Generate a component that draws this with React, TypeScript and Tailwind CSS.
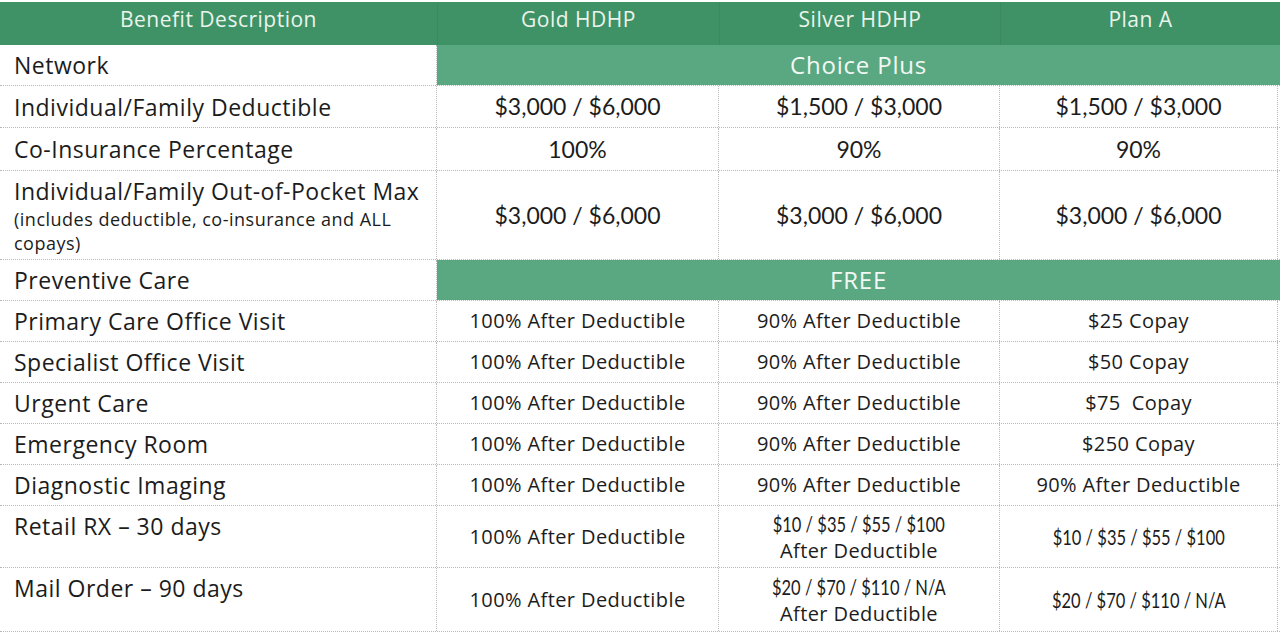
const cols = "grid-cols-[437px_282px_281px_280px]";
const line = "border-dotted border-[#b8b8b8]";

type Row = {
  label: string;
  sub?: string;
  values?: string[];
  span?: string;
  h: string;
  top?: boolean;
  kind?: "big" | "small" | "rx";
};

const after = "100% After Deductible";
const after90 = "90% After Deductible";

const rows: Row[] = [
  { label: "Network", span: "Choice Plus", h: "h-[41px]" },
  { label: "Individual/Family Deductible", values: ["$3,000 / $6,000", "$1,500 / $3,000", "$1,500 / $3,000"], h: "h-[42px]", kind: "big" },
  { label: "Co-Insurance Percentage", values: ["100%", "90%", "90%"], h: "h-[43px]", kind: "big" },
  {
    label: "Individual/Family Out-of-Pocket Max",
    sub: "(includes deductible, co-insurance and ALL copays)",
    values: ["$3,000 / $6,000", "$3,000 / $6,000", "$3,000 / $6,000"],
    h: "h-[89px]",
    top: true,
    kind: "big",
  },
  { label: "Preventive Care", span: "FREE", h: "h-[41px]" },
  { label: "Primary Care Office Visit", values: [after, after90, "$25 Copay"], h: "h-[41px]", kind: "small" },
  { label: "Specialist Office Visit", values: [after, after90, "$50 Copay"], h: "h-[41px]", kind: "small" },
  { label: "Urgent Care", values: [after, after90, "$75  Copay"], h: "h-[41px]", kind: "small" },
  { label: "Emergency Room", values: [after, after90, "$250 Copay"], h: "h-[41px]", kind: "small" },
  { label: "Diagnostic Imaging", values: [after, after90, after90], h: "h-[41px]", kind: "small" },
  {
    label: "Retail RX – 30 days",
    values: [after, "$10 / $35 / $55 / $100\nAfter Deductible", "$10 / $35 / $55 / $100"],
    h: "h-[62px]",
    top: true,
    kind: "rx",
  },
  {
    label: "Mail Order – 90 days",
    values: [after, "$20 / $70 / $110 / N/A\nAfter Deductible", "$20 / $70 / $110 / N/A"],
    h: "h-[64px]",
    top: true,
    kind: "rx",
  },
];

function Value({ text, kind, i }: { text: string; kind?: Row["kind"]; i: number }) {
  const border = `border-r ${line} ${i === 2 ? "mr-[2px]" : ""}`;
  if (kind === "big") {
    return (
      <div className={`flex items-center justify-center text-[23px] font-['Lato',sans-serif] ${border}`}>
        {text}
      </div>
    );
  }
  if (kind === "rx" && i > 0) {
    const [nums, rest] = text.split("\n");
    return (
      <div className={`flex flex-col items-center justify-center text-center leading-[27px] ${border}`}>
        <div className="text-[22px] font-['Lato',sans-serif] whitespace-pre scale-x-[0.75]">{nums}</div>
        {rest && <div className="text-[20px] tracking-[0.4px]">{rest}</div>}
      </div>
    );
  }
  return (
    <div className={`flex items-center justify-center text-[20px] tracking-[0.4px] whitespace-pre ${border}`}>
      {text}
    </div>
  );
}

export default function App() {
  return (
    <div className="w-[1280px] h-[633px] bg-white overflow-hidden text-[#1c1c1c] font-['Open_Sans','Liberation_Sans',sans-serif]">
      <div className={`grid ${cols} h-[45px] bg-[#3f9265] text-[#eaf4ec] text-[21px] tracking-[0.5px] border-t-2 border-white`}>
        {["Benefit Description", "Gold HDHP", "Silver HDHP", "Plan A"].map((t, i) => (
          <div
            key={t}
            className={`flex items-center justify-center pb-[8px] ${i > 0 ? "border-l border-[#3a8a5e]" : ""}`}>
            {t}
          </div>
        ))}
      </div>

      {rows.map((r) => (
        <div key={r.label} className={`grid ${cols} ${r.h} border-b ${line}`}>
          <div
            className={`flex flex-col ${r.top ? "justify-start pt-[6px]" : "justify-center"} pl-[14px] border-r ${line}`}>
            <div className="text-[23px] leading-[28px] tracking-[0.5px]">{r.label}</div>
            {r.sub && (
              <div className="text-[18px] leading-[24px] mt-[2px] w-[400px] tracking-[0.5px]">{r.sub}</div>
            )}
          </div>
          {r.span ? (
            <div className="col-span-3 bg-[#5aa882] text-[#f2f8f3] text-[24px] tracking-[0.8px] flex items-center justify-center">
              {r.span}
            </div>
          ) : (
            r.values!.map((v, i) => <Value key={i} text={v} kind={r.kind} i={i} />)
          )}
        </div>
      ))}
    </div>
  );
}
